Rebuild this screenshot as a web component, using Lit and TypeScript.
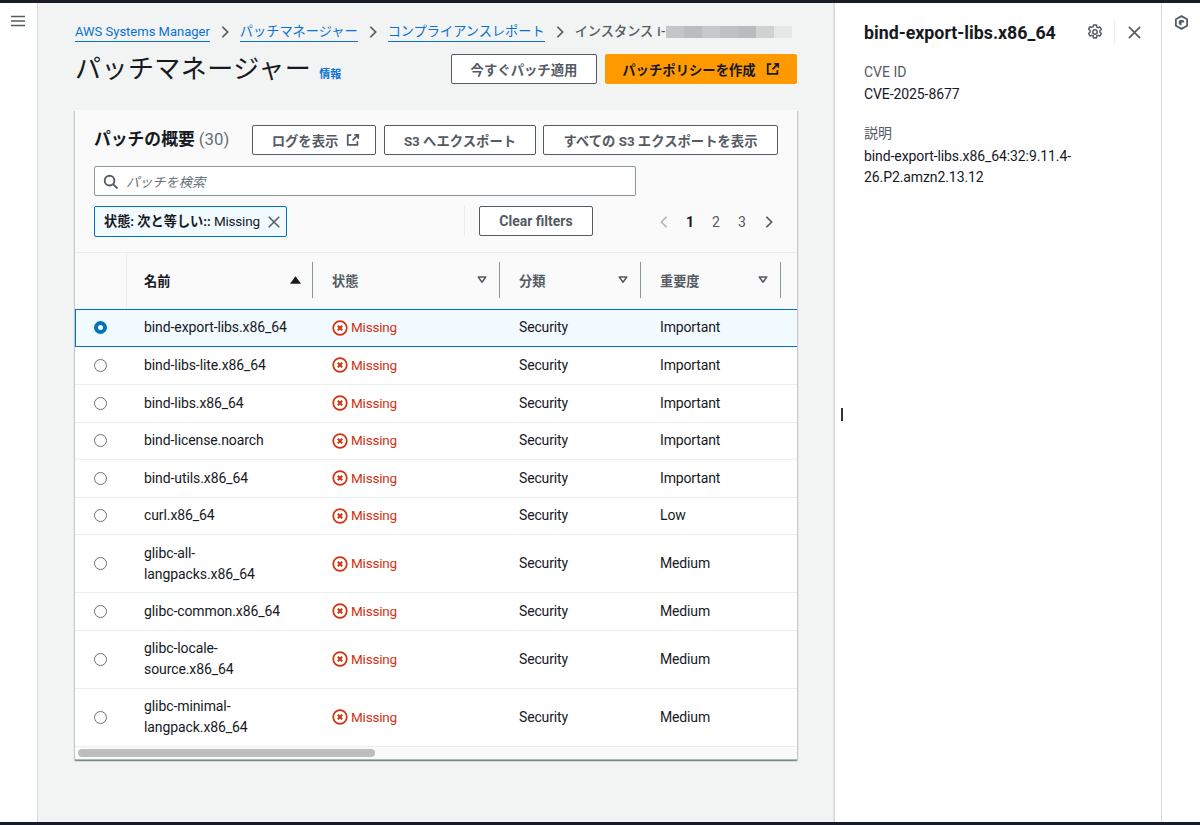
import { LitElement, html, css } from "lit";
import { customElement } from "lit/decorators.js";

const ext = html`<svg class="ext" viewBox="0 0 16 16" width="14" height="14" fill="none" stroke="currentColor" stroke-width="2"><path d="M6 2.5H2v11h11V9.5M9.5 2H14v4.5M14 2 7.5 8.5"/></svg>`;
const caretDown = html`<svg class="caret" viewBox="0 0 16 16" width="12" height="12" fill="none" stroke="currentColor" stroke-width="2"><path d="M3 4h10l-5 7z" stroke-linejoin="round"/></svg>`;
const missing = html`<svg viewBox="0 0 16 16" width="16" height="16" fill="none" stroke="currentColor" stroke-width="1.7"><circle cx="8" cy="8" r="6.8"/><path d="M5.8 5.8l4.4 4.4M10.2 5.8l-4.4 4.4" stroke-width="2"/></svg>`;
const chev = html`<svg class="chev" viewBox="0 0 16 16" width="16" height="16" fill="none" stroke="currentColor" stroke-width="2"><path d="M5 2l6 6-6 6"/></svg>`;
const close = (s: number) => html`<svg viewBox="0 0 16 16" width=${s} height=${s} fill="none" stroke="currentColor" stroke-width="1.7"><path d="M2 2l12 12M14 2 2 14"/></svg>`;

const rows: [string, string][] = [
  ["bind-export-libs.x86_64", "Important"],
  ["bind-libs-lite.x86_64", "Important"],
  ["bind-libs.x86_64", "Important"],
  ["bind-license.noarch", "Important"],
  ["bind-utils.x86_64", "Important"],
  ["curl.x86_64", "Low"],
  ["glibc-all-langpacks.x86_64", "Medium"],
  ["glibc-common.x86_64", "Medium"],
  ["glibc-locale-source.x86_64", "Medium"],
  ["glibc-minimal-langpack.x86_64", "Medium"],
];

const redaction = ["#c3c6c9", "#b9bdc0", "#c6c9cb", "#bdc1c3", "#b9bcbf", "#cfd2d3", "#e6e7e8"];

@customElement("app-root")
export class AppRoot extends LitElement {
  static styles = css`
    :host { display: block; width: 1200px; height: 825px; overflow: hidden; position: relative; box-sizing: border-box;
      border-top: 3px solid #161d26; border-bottom: 3px solid #161d26; background: #fff;
      font-family: Roboto, "Noto Sans CJK JP", sans-serif; font-size: 14px; color: #16191f; }
    * { box-sizing: border-box; }
    button { font-family: inherit; padding: 0; }
    .shell { display: grid; grid-template-columns: 38px 796px 328px 38px; height: 819px; }
    .nav { border-right: 1px solid #d5dbdb; padding: 12px 0 0 11px; color: #545b64; }
    .nav svg { display: block; }
    .main { background: #f2f3f3; padding: 17px 36px 0 37px; border-right: 1px solid #dfe3e3; }
    .crumbs { display: flex; align-items: center; height: 24px; line-height: 24px; white-space: nowrap; font-size: 13.2px; }
    .crumbs a { color: #0972d3; border-bottom: 1px solid #0972d3; line-height: 16px; height: 18px; margin-top: 2px; }
    .crumbs a.en { font-size: 13px; }
    .crumbs .chev { color: #545b64; margin: 0 7.5px 0 8.5px; width: 14px; height: 14px; flex: none; }
    .crumbs .cur { color: #545b64; font-weight: 500; flex: none; }
    .crumbs .cur span { margin-left: 4px; letter-spacing: 0.4px; }
    .redact { display: flex; height: 12px; width: 126px; flex: none; }
    .redact span { flex: 1; }
    .head { display: flex; align-items: center; height: 40px; margin-top: 5px; }
    h1 { margin: 0; font-size: 26px; font-weight: 400; letter-spacing: 0.45px; line-height: 40px; white-space: nowrap; }
    .info { color: #0972d3; font-size: 11px; font-weight: 700; margin: 8px 0 0 8px; }
    .actions { margin-left: auto; display: flex; gap: 8px; }
    .btn { height: 30px; display: inline-flex; align-items: center; justify-content: center; gap: 10px; background: #fff;
      border: 1px solid #545b64; border-radius: 2px; color: #545b64; font-weight: 700; font-size: 13.35px; white-space: nowrap; }
    .btn.en { font-size: 14px; }
    .btn.tight { gap: 8px; padding-left: 4px; }
    .btn.primary { background: #ff9900; border-color: #ff9900; color: #16191f; }
    .card { margin-top: 21px; width: 722px; background: #fff; box-shadow: 0 1px 1px 0 rgba(0,28,36,.3), 1px 1px 1px 0 rgba(0,28,36,.15), -1px 1px 1px 0 rgba(0,28,36,.15); }
    .top { background: #fafafa; padding: 15px 19px 0 19px; height: 143px; border-bottom: 1px solid #eaeded; }
    .title-row { display: flex; align-items: center; height: 30px; }
    h2 { margin: 0 0 2px; font-size: 16.8px; font-weight: 700; white-space: nowrap; line-height: 30px; width: 158px; flex: none; }
    h2 span { font-weight: 400; color: #687078; }
    .title-row .btns { display: flex; gap: 8px; }
    .title-row .btns .btn + .btn + .btn { margin-left: -1px; }
    .search { margin-top: 11px; width: 542px; height: 30px; background: #fff; border: 1px solid #879596; border-radius: 2px;
      display: flex; align-items: center; padding-left: 8px; gap: 8px; color: #687078; font-style: italic; font-size: 13.2px; }
    .search svg { color: #545b64; flex: none; }
    .filter-row { display: flex; align-items: flex-start; margin-top: 10px; height: 31px; }
    .token { width: 193px; height: 31px; background: #f1faff; border: 1px solid #0073bb; border-radius: 2px; display: flex; align-items: center;
      padding: 0 5px 0 9px; justify-content: space-between; font-size: 13.5px; letter-spacing: -0.2px; white-space: nowrap; }
    .token span { margin-bottom: 2px; }
    .token b { font-weight: 700; font-size: 13.2px; letter-spacing: 0; }
    .token svg { color: #545b64; }
    .sep { width: 1px; height: 30px; background: #eaeded; margin-left: 177px; }
    .clear { width: 114px; margin-left: 14px; }
    .pager { display: flex; align-items: center; margin-left: 64px; height: 31px; color: #545b64; }
    .pager span { width: 26px; text-align: center; }
    .pager .on { color: #16191f; font-weight: 700; }
    .pager .chev.prev { transform: scaleX(-1); color: #aab7b8; width: 14px; height: 14px; margin-right: 6px; }
    .pager .chev.next { color: #545b64; width: 14px; height: 14px; margin-left: 7px; }
    .grid { display: grid; grid-template-columns: 51px 187px 187px 141px 140px 16px; }
    .th { height: 56px; background: #fafafa; display: flex; align-items: center; padding: 0 12px 2px 19px; position: relative;
      color: #545b64; font-weight: 700; font-size: 13.2px; justify-content: space-between; }
    .th::after { content: ""; position: absolute; right: 0; top: 9px; height: 36px; width: 1px; background: #879596; }
    .th.check::after, .th.end::after { display: none; }
    .th.end { padding: 0; }
    .th.name { color: #16191f; border-left: 1px solid #eaeded; background-clip: padding-box; padding-left: 17px; }
    .row { display: contents; }
    .td { display: flex; align-items: center; height: 37.5px; border-top: 1px solid #eaeded; padding: 0 10px 0 19px; line-height: 21px; letter-spacing: -0.15px; }
    .td.first { padding: 0 0 0 19px; }
    .td.pkg { padding-left: 18px; letter-spacing: -0.09px; }
    .td.end { padding: 0; }
    .tall .td { height: 58px; }
    .sel .td { background: #f1faff; border-top: 1px solid #0073bb; border-bottom: 1px solid #0073bb; }
    .sel + .row .td { border-top: none; }
    .sel .td.first { border-left: 1px solid #0073bb; padding-left: 18px; }
    .td.status { color: #d13212; gap: 3px; font-size: 13.5px; letter-spacing: -0.2px; }
    .radio { width: 13px; height: 13px; border-radius: 50%; border: 1px solid #687078; background: #fff; flex: none; }
    .radio.on { border: 4px solid #0073bb; }
    .scroll { height: 14px; border-top: 1px solid #eaeded; background: #fafafa; padding: 2px 3px; border-bottom: 1px solid #aab7b8; }
    .scroll div { width: 297px; height: 8px; border-radius: 4px; background: #bdbdbd; }
    .panel { border-left: 1px solid #d5dbdb; border-right: 1px solid #d5dbdb; padding: 15px 0 0 29px; }
    .phead { display: flex; align-items: center; height: 28px; color: #545b64; }
    .phead h3 { margin: 0; font-size: 17.8px; font-weight: 700; color: #16191f; width: 223px; white-space: nowrap; }
    .pdiv { width: 1px; height: 24px; background: #eaeded; margin: 0 12px 0 11px; }
    .label { color: #545b64; margin-top: 15px; line-height: 22px; }
    .value { line-height: 21px; margin-top: 1px; width: 225px; letter-spacing: -0.09px; }
    .value.desc { margin-top: 2px; }
    .value + .label { margin-top: 17px; }
    .rail { padding: 12px 0 0 12px; color: #545b64; }
    .rail svg { display: block; }
    .cursor { position: absolute; left: 841px; top: 405px; width: 1.5px; height: 13px; background: #333; }
  `;

  render() {
    return html`
      <div class="shell">
        <div class="nav">
          <svg viewBox="0 0 14 12" width="14" height="12" fill="none" stroke="currentColor" stroke-width="1.7"><path d="M0 1.5h14M0 6h14M0 10.5h14"/></svg>
        </div>
        <div class="main">
          <div class="crumbs">
            <a class="en">AWS Systems Manager</a>${chev}
            <a>パッチマネージャー</a>${chev}
            <a>コンプライアンスレポート</a>${chev}
            <div class="cur">インスタンス<span>i-</span></div>
            <div class="redact">${redaction.map((c) => html`<span style="background:${c}"></span>`)}</div>
          </div>
          <div class="head">
            <h1>パッチマネージャー</h1><span class="info">情報</span>
            <div class="actions">
              <button class="btn" style="width:146px">今すぐパッチ適用</button>
              <button class="btn primary" style="width:192px">パッチポリシーを作成 ${ext}</button>
            </div>
          </div>
          <div class="card">
            <div class="top">
              <div class="title-row">
                <h2>パッチの概要 <span>(30)</span></h2>
                <div class="btns">
                  <button class="btn tight" style="width:124px">ログを表示 ${ext}</button>
                  <button class="btn" style="width:152px">S3 へエクスポート</button>
                  <button class="btn" style="width:235px">すべての S3 エクスポートを表示</button>
                </div>
              </div>
              <div class="search">
                <svg viewBox="0 0 16 16" width="15" height="15" fill="none" stroke="currentColor" stroke-width="2"><circle cx="7" cy="7" r="5.2"/><path d="M11 11l4.5 4.5"/></svg>
                パッチを検索
              </div>
              <div class="filter-row">
                <div class="token"><span><b>状態: 次と等しい::</b> Missing</span>${close(14)}</div>
                <div class="sep"></div>
                <button class="btn en clear">Clear filters</button>
                <div class="pager">
                  <svg class="chev prev" viewBox="0 0 16 16" fill="none" stroke="currentColor" stroke-width="2"><path d="M5 2l6 6-6 6"/></svg>
                  <span class="on">1</span><span>2</span><span>3</span>
                  <svg class="chev next" viewBox="0 0 16 16" fill="none" stroke="currentColor" stroke-width="2"><path d="M5 2l6 6-6 6"/></svg>
                </div>
              </div>
            </div>
            <div class="grid">
              <div class="th check"></div>
              <div class="th name">名前
                <svg viewBox="0 0 12 8" width="11" height="8" fill="#16191f"><path d="M6 0l6 8H0z"/></svg>
              </div>
              <div class="th">状態 ${caretDown}</div>
              <div class="th">分類 ${caretDown}</div>
              <div class="th">重要度 ${caretDown}</div>
              <div class="th end"></div>
              ${rows.map(([name, sev], i) => {
                const tall = name.length > 22 && !name.startsWith("bind");
                const cls = `row ${i === 0 ? "sel" : ""} ${tall ? "tall" : ""}`;
                return html`<div class=${cls}>
                  <div class="td first"><span class="radio ${i === 0 ? "on" : ""}"></span></div>
                  <div class="td pkg">${this.wrapName(name)}</div>
                  <div class="td status">${missing}<span>Missing</span></div>
                  <div class="td">Security</div>
                  <div class="td">${sev}</div>
                  <div class="td end"></div>
                </div>`;
              })}
            </div>
            <div class="scroll"><div></div></div>
          </div>
        </div>
        <div class="panel">
          <div class="phead">
            <h3>bind-export-libs.x86_64</h3>
            <svg viewBox="0 0 16 16" width="16" height="16" fill="none" stroke="currentColor" stroke-width="1.5" stroke-linejoin="round"><circle cx="8" cy="8" r="2.2"/><path d="M6.6 1h2.8l.4 2 1.3.7 1.9-.7 1.4 2.5-1.5 1.3v1.4l1.5 1.3-1.4 2.5-1.9-.7-1.3.7-.4 2H6.6l-.4-2-1.3-.7-1.9.7-1.4-2.5 1.5-1.3V6.5L1.6 5.2 3 2.7l1.9.7 1.3-.7z"/></svg>
            <span class="pdiv"></span>
            ${close(15)}
          </div>
          <div class="label">CVE ID</div>
          <div class="value">CVE-2025-8677</div>
          <div class="label">説明</div>
          <div class="value desc">bind-export-libs.x86_64:32:9.11.4-26.P2.amzn2.13.12</div>
        </div>
        <div class="rail">
          <svg viewBox="0 0 16 16" width="15" height="15" fill="none" stroke="currentColor" stroke-width="1.9" stroke-linejoin="round"><path d="M8 1.2l6 3.4v6.8L8 14.8l-6-3.4V4.6z"/><path d="M8 8V5a3 3 0 1 0 3 3z" fill="currentColor" stroke="none" transform="rotate(90 8 8)"/></svg>
        </div>
      </div>
      <div class="cursor"></div>
    `;
  }

  wrapName(n: string) {
    if (n === "glibc-all-langpacks.x86_64") return html`glibc-all-<br />langpacks.x86_64`;
    if (n === "glibc-locale-source.x86_64") return html`glibc-locale-<br />source.x86_64`;
    if (n === "glibc-minimal-langpack.x86_64") return html`glibc-minimal-<br />langpack.x86_64`;
    return n;
  }
}
